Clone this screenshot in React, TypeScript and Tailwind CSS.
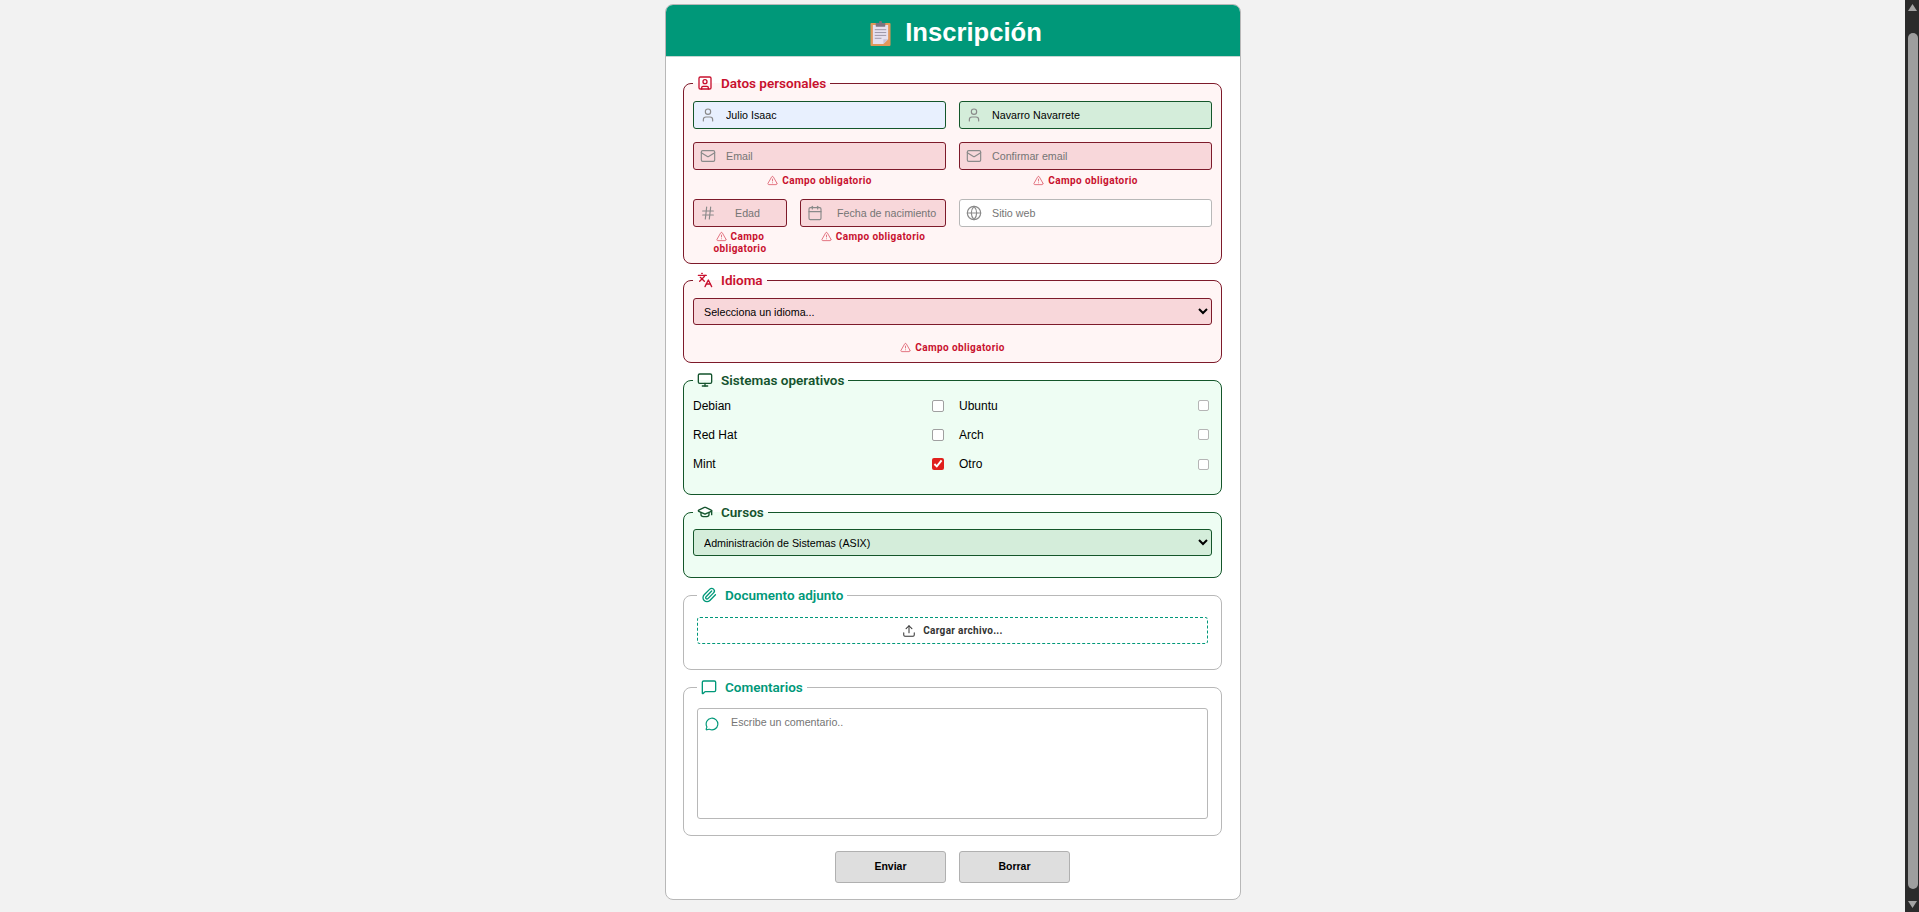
import React from 'react';
import {
  Calendar,
  Globe,
  GraduationCap,
  Hash,
  Languages,
  Mail,
  MessageCircle,
  MessageSquare,
  Monitor,
  Paperclip,
  SquareUser,
  TriangleAlert,
  Upload,
  User,
} from 'lucide-react';
import type { LucideIcon } from 'lucide-react';

type Tone = 'error' | 'ok' | 'neutral';

const fieldsetTone: Record<Tone, string> = {
  error: 'border-[#7d1a2a] bg-[#fff5f5] px-[9px]',
  ok: 'border-[#14562a] bg-[#eefdf3] px-[9px]',
  neutral: 'border-[#b8b8b8] bg-white px-[13px]',
};

const legendTone: Record<Tone, string> = {
  error: 'text-[#c8102e]',
  ok: 'text-[#14532d]',
  neutral: 'text-[#009879]',
};

const inputTone: Record<string, string> = {
  error: 'border-[#7d1a2a] bg-[#f8d7da]',
  ok: 'border-[#14562a] bg-[#d4edda]',
  filled: 'border-[#14562a] bg-[#e8f0fe]',
  neutral: 'border-[#b8b8b8] bg-white',
};

const Section: React.FC<{
  title: string;
  icon: LucideIcon;
  tone: Tone;
  className?: string;
  children: React.ReactNode;
}> = ({ title, icon: Icon, tone, className = '', children }) => (
  <fieldset className={`rounded-lg border ${fieldsetTone[tone]} ${className}`}>
    <legend className={`flex h-[18px] items-center gap-[8px] pr-[4px] pl-[4px] font-['Roboto',sans-serif] text-[13.5px] font-semibold ${legendTone[tone]}`}>
      <Icon size={16} strokeWidth={2} />
      {title}
    </legend>
    {children}
  </fieldset>
);

const ErrorText: React.FC<{ className?: string }> = ({ className = '' }) => (
  <p className={`text-center font-['Roboto',sans-serif] text-[10px] leading-[12px] font-bold tracking-[0.4px] text-[#c8102e] ${className}`}>
    <TriangleAlert size={11} strokeWidth={1.75} className="mr-[4px] inline-block text-[#dc5565] align-[-2px]" />
    Campo obligatorio
  </p>
);

const Field: React.FC<{
  icon: LucideIcon;
  placeholder: string;
  tone: string;
  value?: string;
  pad?: string;
}> = ({ icon: Icon, placeholder, tone, value, pad = 'pl-[32px]' }) => (
  <div className="relative">
    <Icon
      size={16}
      strokeWidth={1.75}
      className="absolute top-[6px] left-[7px] text-[#8a8a8a]"
    />
    <input
      defaultValue={value}
      placeholder={placeholder}
      className={`block h-[28px] w-full rounded-[3px] border text-[10.7px] text-black outline-none placeholder:text-[#757575] ${pad} ${inputTone[tone]}`}
    />
  </div>
);

const Check: React.FC<{ label: string; small?: boolean; checked?: boolean }> = ({ label, small, checked }) => (
  <label className="flex h-[29.3px] items-center justify-between text-[12px] text-black">
    {label}
    <input
      type="checkbox"
      defaultChecked={checked}
      className={`m-0 appearance-none rounded-[2px] border-[1.5px] bg-white checked:appearance-auto checked:accent-[#e0201c] ${
        small ? 'mr-[3px] h-[11px] w-[11px] border-[#b5b5b5]' : 'mr-[2px] h-[12px] w-[12px] border-[#a0a0a0]'
      }`}
    />
  </label>
);

const ClipboardEmoji = () => (
  <svg width="21" height="25" viewBox="0 0 22 26" className="mt-[2px]">
    <rect x="0.5" y="2" width="21" height="24" rx="1" fill="#e0975a" />
    <path d="M3 4h16v15l-5 5H3z" fill="#e6e0ef" />
    <path d="M14 24l5-5h-5z" fill="#c9c2d6" />
    <path d="M5 9h12M5 12h12M5 15h12M5 18h7" stroke="#9a94a6" strokeWidth="1" />
    <rect x="6" y="2" width="10" height="4" rx="0.5" fill="#7c7480" />
    <rect x="9.5" y="0" width="3" height="3" rx="1" fill="#7c7480" />
  </svg>
);

const Scrollbar = () => (
  <aside className="flex h-screen w-[14px] shrink-0 flex-col items-center bg-[#2b2b2b] pl-[1px]">
    <svg width="9" height="7" viewBox="0 0 9 7" className="mt-[4px] shrink-0">
      <path d="M4.5 0L9 7H0z" fill="#a3a3a3" />
    </svg>
    <div className="mt-[22px] h-[856px] w-[10px] rounded-t-[5px] rounded-b-[5px] bg-[#9e9e9e]" />
    <svg width="9" height="7" viewBox="0 0 9 7" className="mt-[12px] shrink-0">
      <path d="M4.5 7L0 0h9z" fill="#a3a3a3" />
    </svg>
  </aside>
);

export default function App() {
  return (
    <div className="flex h-screen overflow-hidden bg-[#f2f2f2] font-['Liberation_Sans',Arial,sans-serif]">
      <main className="flex-1 pt-[4px]">
        <form className="mx-auto h-[896px] w-[576px] overflow-hidden rounded-lg border border-[#b8b8b8] bg-white">
          <header className="flex h-[52px] items-center justify-center gap-[14px] border-b border-[#c4d6d1] bg-[#009879] pt-[3px] pl-[7px] text-[25.6px] font-bold text-white">
            <ClipboardEmoji />
            Inscripción
          </header>

          <div className="flex flex-col px-[17.5px] pt-[17px]">
            <Section title="Datos personales" icon={SquareUser} tone="error" className="h-[190px]">
              <div className="grid grid-cols-2 gap-x-[13px] pt-[9px]">
                <Field icon={User} placeholder="Nombre" tone="filled" value="Julio Isaac" />
                <Field icon={User} placeholder="Apellidos" tone="ok" value="Navarro Navarrete" />

                <div className="pt-[13px]">
                  <Field icon={Mail} placeholder="Email" tone="error" />
                  <ErrorText className="pt-[5px]" />
                </div>
                <div className="pt-[13px]">
                  <Field icon={Mail} placeholder="Confirmar email" tone="error" />
                  <ErrorText className="pt-[5px]" />
                </div>

                <div className="grid grid-cols-[94px_146px] gap-x-[13px] pt-[12px]">
                  <div>
                    <Field icon={Hash} placeholder="Edad" tone="error" pad="pl-[41px]" />
                    <ErrorText className="pt-[4px]" />
                  </div>
                  <div>
                    <Field icon={Calendar} placeholder="Fecha de nacimiento" tone="error" pad="pl-[36px]" />
                    <ErrorText className="pt-[4px]" />
                  </div>
                </div>
                <div className="pt-[12px]">
                  <Field icon={Globe} placeholder="Sitio web" tone="neutral" />
                </div>
              </div>
            </Section>

            <Section title="Idioma" icon={Languages} tone="error" className="mt-[7px] h-[92px]">
              <select className={`mt-[9px] block h-[27px] w-full rounded-[3px] border pl-[6px] text-[10.7px] text-black outline-none ${inputTone.error}`}>
                <option>Selecciona un idioma...</option>
              </select>
              <ErrorText className="pt-[17px]" />
            </Section>

            <Section title="Sistemas operativos" icon={Monitor} tone="ok" className="mt-[8px] h-[124px]">
              <div className="grid grid-cols-2 gap-x-[13px] pt-[2px]">
                <Check label="Debian" />
                <Check label="Ubuntu" small />
                <Check label="Red Hat" />
                <Check label="Arch" small />
                <Check label="Mint" checked />
                <Check label="Otro" small />
              </div>
            </Section>

            <Section title="Cursos" icon={GraduationCap} tone="ok" className="mt-[8px] h-[75px]">
              <select className={`mt-[8px] block h-[27px] w-full rounded-[3px] border pl-[6px] text-[10.7px] text-black outline-none ${inputTone.ok}`}>
                <option>Administración de Sistemas (ASIX)</option>
              </select>
            </Section>

            <Section title="Documento adjunto" icon={Paperclip} tone="neutral" className="mt-[8px] h-[84px]">
              <label className="mt-[13px] flex h-[27px] items-center justify-center gap-[7px] rounded-[3px] border border-dashed border-[#009879] font-['Roboto',sans-serif] text-[10px] font-bold tracking-[0.3px] text-[#333333]">
                <Upload size={14} strokeWidth={1.75} />
                Cargar archivo...
              </label>
            </Section>

            <Section title="Comentarios" icon={MessageSquare} tone="neutral" className="mt-[8px] h-[158px]">
              <div className="relative mt-[12px]">
                <MessageCircle size={14} strokeWidth={2} className="absolute top-[9px] left-[8px] text-[#009879]" />
                <textarea
                  placeholder="Escribe un comentario.."
                  className="block h-[111px] w-full resize-none rounded-[3px] border border-[#b8b8b8] pt-[5px] pl-[33px] text-[10.7px] outline-none placeholder:text-[#757575]"
                />
              </div>
            </Section>

            <div className="flex justify-center gap-[13px] pt-[15px]">
              <button type="button" className="h-[32px] w-[111px] rounded-[3px] border border-[#b0b0b0] bg-[#dedede] text-[10.5px] font-bold text-black">
                Enviar
              </button>
              <button type="button" className="h-[32px] w-[111px] rounded-[3px] border border-[#b0b0b0] bg-[#dedede] text-[10.5px] font-bold text-black">
                Borrar
              </button>
            </div>
          </div>
        </form>
      </main>
      <Scrollbar />
    </div>
  );
}
